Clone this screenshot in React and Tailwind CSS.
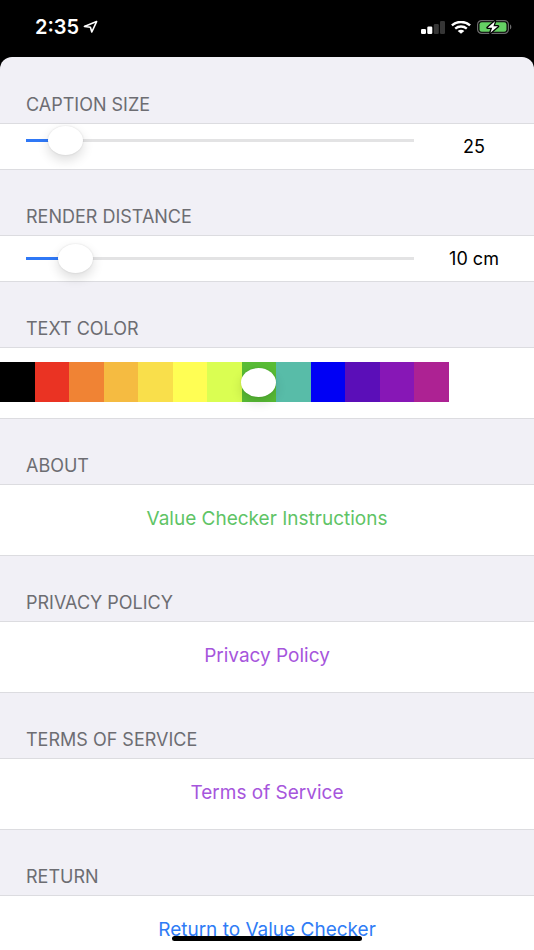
import React, { useState } from 'react';

const SWATCHES = [
  '#000000', '#ea3323', '#f08334', '#f5bb41', '#f9df4b', '#fffe54', '#dafe52',
  '#58bc35', '#58bca8', '#0000f5', '#5b0eb8', '#8717b6', '#ad2293',
];

// oval iOS-like thumb shared by every slider
const THUMB = `appearance-none bg-transparent outline-none
  [&::-webkit-slider-thumb]:appearance-none [&::-webkit-slider-thumb]:w-[35px]
  [&::-webkit-slider-thumb]:h-[29px] [&::-webkit-slider-thumb]:rounded-[50%]
  [&::-webkit-slider-thumb]:bg-white
  [&::-webkit-slider-thumb]:shadow-[0_5px_12px_rgba(0,0,0,0.14),0_0_2px_rgba(0,0,0,0.12)]`;

function swatchGradient() {
  const step = 100 / SWATCHES.length;
  const stops = SWATCHES.map((c, i) => `${c} ${i * step}% ${(i + 1) * step}%`);
  return `linear-gradient(to right, ${stops.join(', ')})`;
}

function StatusBar() {
  return (
    <div className="flex h-[57px] shrink-0 items-start justify-between pt-[15px] pr-[22px] pl-[35px] text-white">
      <div className="flex h-6 items-center gap-1">
        <span className="text-[20px] leading-6 font-semibold">2:35</span>
        <svg width="15" height="14" viewBox="0 0 15 14" fill="none" stroke="currentColor" strokeWidth="1.6" strokeLinejoin="round">
          <path d="M13.6 1.6 1.4 6.4 7.4 7.2 8.8 12Z" />
        </svg>
      </div>
      <div className="flex h-6 items-center gap-[6px]">
        <svg width="24" height="13" viewBox="0 0 24 13" fill="currentColor">
          <rect x="0" y="8" width="5" height="5" rx="1.2" />
          <rect x="6.3" y="5.5" width="5" height="7.5" rx="1.2" />
          <rect x="12.8" y="3" width="5" height="10" rx="1.2" fill="#363636" />
          <rect x="19" y="0" width="5" height="13" rx="1.2" fill="#363636" />
        </svg>
        <svg width="20" height="13" viewBox="0 0 20 13" fill="none" stroke="currentColor" strokeWidth="2.4">
          <path d="M.9 4.3C6 -.2 14 -.2 19.1 4.3" />
          <path d="M4.2 7.6C7.5 4.8 12.5 4.8 15.8 7.6" />
          <path d="M6.7 10C8.6 8.4 11.4 8.4 13.3 10L10 12.8Z" fill="currentColor" stroke="none" />
        </svg>
        <svg width="35" height="14" viewBox="0 0 35 14">
          <rect x=".6" y=".6" width="30.8" height="12.8" rx="4" fill="none" stroke="#6b6b6b" strokeWidth="1.2" />
          <rect x="2.5" y="2.3" width="27" height="9.4" rx="2.2" fill="#65d064" />
          <path d="M33 4.6C34.8 5.2 34.8 8.8 33 9.4Z" fill="#6b6b6b" />
          <path d="M18 1.2 10.6 7.7H15.2L13.4 12.8 21 6.3H16.4Z" fill="#fff" stroke="#000" strokeWidth="2.6" paintOrder="stroke" strokeLinejoin="round" />
        </svg>
      </div>
    </div>
  );
}

function Section({ title, id, children }) {
  return (
    <section aria-labelledby={id}>
      <h2 id={id} className="flex h-[65px] items-end px-[26px] pb-[6px] text-[18px] leading-6 text-[#6d6d72]">
        {title}
      </h2>
      <div className="border-y border-[#dcdce0] bg-white">{children}</div>
    </section>
  );
}

function SliderRow({ labelledBy, initial, max, unit = '', align }) {
  const [value, setValue] = useState(initial);
  const pct = (value / max) * 100;

  return (
    <div className="flex h-[45px] items-center gap-[26px] px-[26px]">
      <div className={`flex h-full min-w-0 flex-1 ${align}`}>
        <input
          type="range"
          min="0"
          max={max}
          value={value}
          aria-labelledby={labelledBy}
          onChange={e => setValue(Number(e.target.value))}
          className={`${THUMB} h-[29px] w-full bg-[length:100%_3px] bg-center bg-no-repeat`}
          style={{
            backgroundImage: `linear-gradient(to right, #2f78f6 ${pct + 3}%, #e3e3e4 ${pct + 3}%)`,
          }}
        />
      </div>
      <output className="w-[68px] text-center text-[18px] leading-6 text-black">{value}{unit}</output>
    </div>
  );
}

function LinkRow({ href, color, children }) {
  return (
    <a href={href} className={`flex h-[70px] items-center justify-center pb-[2px] text-[19px] leading-6 ${color}`}>
      {children}
    </a>
  );
}

export default function App() {
  const [swatch, setSwatch] = useState(7);

  return (
    <div className="relative flex h-screen flex-col overflow-hidden bg-black font-['Inter','Liberation_Sans',sans-serif]">
      <StatusBar />

      <main className="min-h-0 flex-1 overflow-y-auto rounded-t-xl bg-[#f1f0f6] pt-px [scrollbar-width:none]">
        <Section title="CAPTION SIZE" id="caption-size">
          <SliderRow labelledBy="caption-size" initial={25} max={400} align="items-start pt-[2px]" />
        </Section>

        <Section title="RENDER DISTANCE" id="render-distance">
          <SliderRow labelledBy="render-distance" initial={10} max={110} unit=" cm" align="items-center" />
        </Section>

        <Section title="TEXT COLOR" id="text-color">
          <div className="flex h-[70px] items-center pb-[2px]">
            <input
              type="range"
              min="0"
              max={SWATCHES.length - 1}
              value={swatch}
              aria-labelledby="text-color"
              onChange={e => setSwatch(Number(e.target.value))}
              className={`${THUMB} h-10 w-[84%]`}
              style={{ backgroundImage: swatchGradient() }}
            />
          </div>
        </Section>

        <Section title="ABOUT" id="about">
          <LinkRow href="#instructions" color="text-[#5fc466]">Value Checker Instructions</LinkRow>
        </Section>

        <Section title="PRIVACY POLICY" id="privacy">
          <LinkRow href="#privacy-policy" color="text-[#a655dc]">Privacy Policy</LinkRow>
        </Section>

        <Section title="TERMS OF SERVICE" id="terms">
          <LinkRow href="#terms-of-service" color="text-[#a655dc]">Terms of Service</LinkRow>
        </Section>

        <Section title="RETURN" id="return">
          <button type="button" className="flex h-[70px] w-full items-center justify-center pb-[2px] text-[19px] leading-6 text-[#2f7cf6]">
            Return to Value Checker
          </button>
        </Section>
      </main>

      {/* home indicator */}
      <div className="pointer-events-none absolute inset-x-0 bottom-[9px] flex justify-center">
        <div className="h-[5px] w-[190px] rounded-full bg-black" />
      </div>
    </div>
  );
}
